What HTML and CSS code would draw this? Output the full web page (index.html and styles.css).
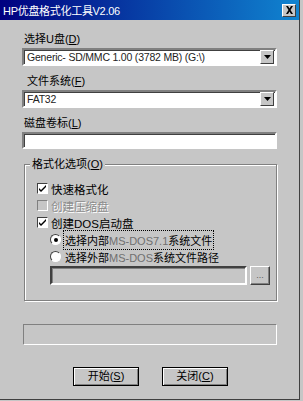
FILE: index.html
```html
<!DOCTYPE html>
<html lang="zh-CN">
<head>
  <meta charset="UTF-8">
  <meta name="viewport" content="width=device-width, initial-scale=1.0">
  <title>HP优盘格式化工具V2.06</title>
  <link rel="stylesheet" href="styles.css">
</head>
<body>

  <div class="window">
    <div class="titlebar">
      <span class="title">HP优盘格式化工具V2.06</span>
      <span class="close">
        <svg width="9" height="8" viewBox="0 0 9 8"><path d="M1 0h2l1.5 2.5L6 0h2L5.5 4 8 8H6L4.5 5.5 3 8H1l2.5-4z" fill="#000"/></svg>
      </span>
    </div>

    <div class="form">
      <div class="label l1">选择U盘(<u>D</u>)</div>
      <div class="select">
        <span class="value">Generic- SD/MMC 1.00 (3782 MB) (G:\)</span>
        <span class="arrow"><svg width="7" height="4" viewBox="0 0 7 4"><path d="M0 0h7L3.5 4z" fill="#000"/></svg></span>
      </div>

      <div class="label l2">文件系统(<u>F</u>)</div>
      <div class="select">
        <span class="value">FAT32</span>
        <span class="arrow"><svg width="7" height="4" viewBox="0 0 7 4"><path d="M0 0h7L3.5 4z" fill="#000"/></svg></span>
      </div>

      <div class="label l3">磁盘卷标(<u>L</u>)</div>
      <div class="textbox"></div>

      <div class="group">
        <div class="legend">格式化选项(<u>O</u>)</div>

        <div class="row check">
          <span class="box"><svg width="7" height="7" viewBox="0 0 7 7"><path d="M0 3l2 2 5-5v2L2 7 0 5z" fill="#000"/></svg></span>
          <span>快速格式化</span>
        </div>
        <div class="row check disabled">
          <span class="box"></span>
          <span>创建压缩盘</span>
        </div>
        <div class="row check">
          <span class="box"><svg width="7" height="7" viewBox="0 0 7 7"><path d="M0 3l2 2 5-5v2L2 7 0 5z" fill="#000"/></svg></span>
          <span>创建DOS启动盘</span>
        </div>

        <div class="row radio">
          <span class="dot on"></span>
          <span class="focus">选择内部<span class="dim">MS-DOS7.1</span>系统文件</span>
        </div>
        <div class="row radio">
          <span class="dot"></span>
          <span>选择外部<span class="dim">MS-DOS</span>系统文件路径</span>
        </div>

        <div class="pathrow">
          <div class="path"></div>
          <div class="browse">...</div>
        </div>
      </div>

      <div class="progress"></div>

      <div class="buttons">
        <div class="btn">开始(<u>S</u>)</div>
        <div class="btn">关闭(<u>C</u>)</div>
      </div>
    </div>
  </div>

</body>
</html>
```

FILE: styles.css
```css
body {
  margin: 0;
  background: #c6c6c6;
  font-family: "Liberation Sans", "Noto Sans CJK SC", sans-serif;
  font-size: 11px;
  color: #000;
}

.window {
  width: 300px;
  height: 400px;
  box-sizing: border-box;
  border-right: 1px solid #404040;
  border-bottom: 1px solid #404040;
  background: #c6c6c6;
}

.titlebar {
  height: 20px;
  background: linear-gradient(90deg, #000080, #1084d0);
  display: flex;
  align-items: center;
  justify-content: space-between;
  padding: 0 3px 0 3px;
}

.title {
  color: #fff;
  font-size: 11px;
  letter-spacing: -0.3px;
}

.close {
  width: 12px;
  height: 11px;
  background: #c6c6c6;
  border: 1px solid;
  border-color: #fff #404040 #404040 #fff;
  display: flex;
  align-items: center;
  justify-content: center;
}

.form {
  padding: 0 22px;
}

.label {
  height: 14px;
  line-height: 14px;
}

u {
  text-decoration: underline;
}

.l1 {
  margin-top: 12px;
  padding-left: 2px;
}

.l2 {
  margin-top: 8px;
  padding-left: 5px;
}

.l3 {
  margin-top: 8px;
  padding-left: 2px;
}

.select {
  margin-top: 2px;
  height: 18px;
  box-sizing: border-box;
  background: #fff;
  border: 2px solid;
  border-color: #808080 #fff #fff #808080;
  box-shadow: inset 1px 1px 0 #404040;
  display: flex;
  align-items: center;
  justify-content: space-between;
}

.value {
  padding-left: 3px;
  font-size: 10.5px;
  letter-spacing: -0.2px;
  color: #222;
}

.arrow {
  width: 12px;
  height: 12px;
  margin-right: 1px;
  background: #c6c6c6;
  border: 1px solid;
  border-color: #fff #404040 #404040 #fff;
  display: flex;
  align-items: center;
  justify-content: center;
}

.textbox {
  margin-top: 2px;
  height: 17px;
  box-sizing: border-box;
  background: #fff;
  border: 2px solid;
  border-color: #808080 #fff #fff #808080;
  box-shadow: inset 1px 1px 0 #404040;
}

.group {
  position: relative;
  margin: 15px 0 0 2px;
  height: 137px;
  box-sizing: border-box;
  border: 1px solid #808080;
  box-shadow: inset 1px 1px 0 #fff, 1px 1px 0 #fff;
  padding: 15px 0 0 12px;
}

.legend {
  position: absolute;
  top: -8px;
  left: 5px;
  padding: 0 2px;
  background: #c6c6c6;
  line-height: 14px;
}

.row {
  display: flex;
  align-items: center;
  height: 17px;
  gap: 3px;
}

.row.check span:last-child {
  font-size: 11.5px;
}

.box {
  width: 9px;
  height: 9px;
  background: #fff;
  border: 1px solid;
  border-color: #404040 #fff #fff #404040;
  display: flex;
  align-items: center;
  justify-content: center;
}

.disabled {
  color: #8c8c8c;
  text-shadow: 1px 1px 0 #fff;
}

.disabled .box {
  background: #c6c6c6;
  border-color: #808080 #fff #fff #808080;
}

.radio {
  padding-left: 13px;
  gap: 4px;
}

.dim {
  color: #707070;
}

.dot {
  width: 9px;
  height: 9px;
  border-radius: 50%;
  background: #fff;
  border: 1px solid;
  border-color: #404040 #fff #fff #404040;
  display: flex;
  align-items: center;
  justify-content: center;
}

.dot.on::after {
  content: "";
  width: 4px;
  height: 4px;
  border-radius: 50%;
  background: #000;
}

.focus {
  outline: 1px dotted #000;
  outline-offset: 1px;
}

.pathrow {
  display: flex;
  align-items: center;
  gap: 3px;
  margin: 1px 0 0 13px;
}

.path {
  width: 197px;
  height: 19px;
  box-sizing: border-box;
  background: #c6c6c6;
  border: 2px solid;
  border-color: #404040 #fff #fff #404040;
  box-shadow: inset 1px 1px 0 #808080;
}

.browse {
  width: 20px;
  height: 19px;
  box-sizing: border-box;
  border: 1px solid;
  border-color: #fff #404040 #404040 #fff;
  box-shadow: inset -1px -1px 0 #808080;
  font-size: 9px;
  line-height: 17px;
  text-align: center;
  color: #606060;
}

.progress {
  margin: 23px 0 0 1px;
  height: 21px;
  box-sizing: border-box;
  border: 1px solid;
  border-color: #808080 #fff #fff #808080;
}

.buttons {
  display: flex;
  justify-content: center;
  gap: 23px;
  margin-top: 22px;
  padding-left: 2px;
}

.btn {
  width: 66px;
  height: 19px;
  box-sizing: border-box;
  border: 1px solid #000;
  box-shadow: inset 1px 1px 0 #fff, inset -1px -1px 0 #808080;
  text-align: center;
  line-height: 17px;
}
```
